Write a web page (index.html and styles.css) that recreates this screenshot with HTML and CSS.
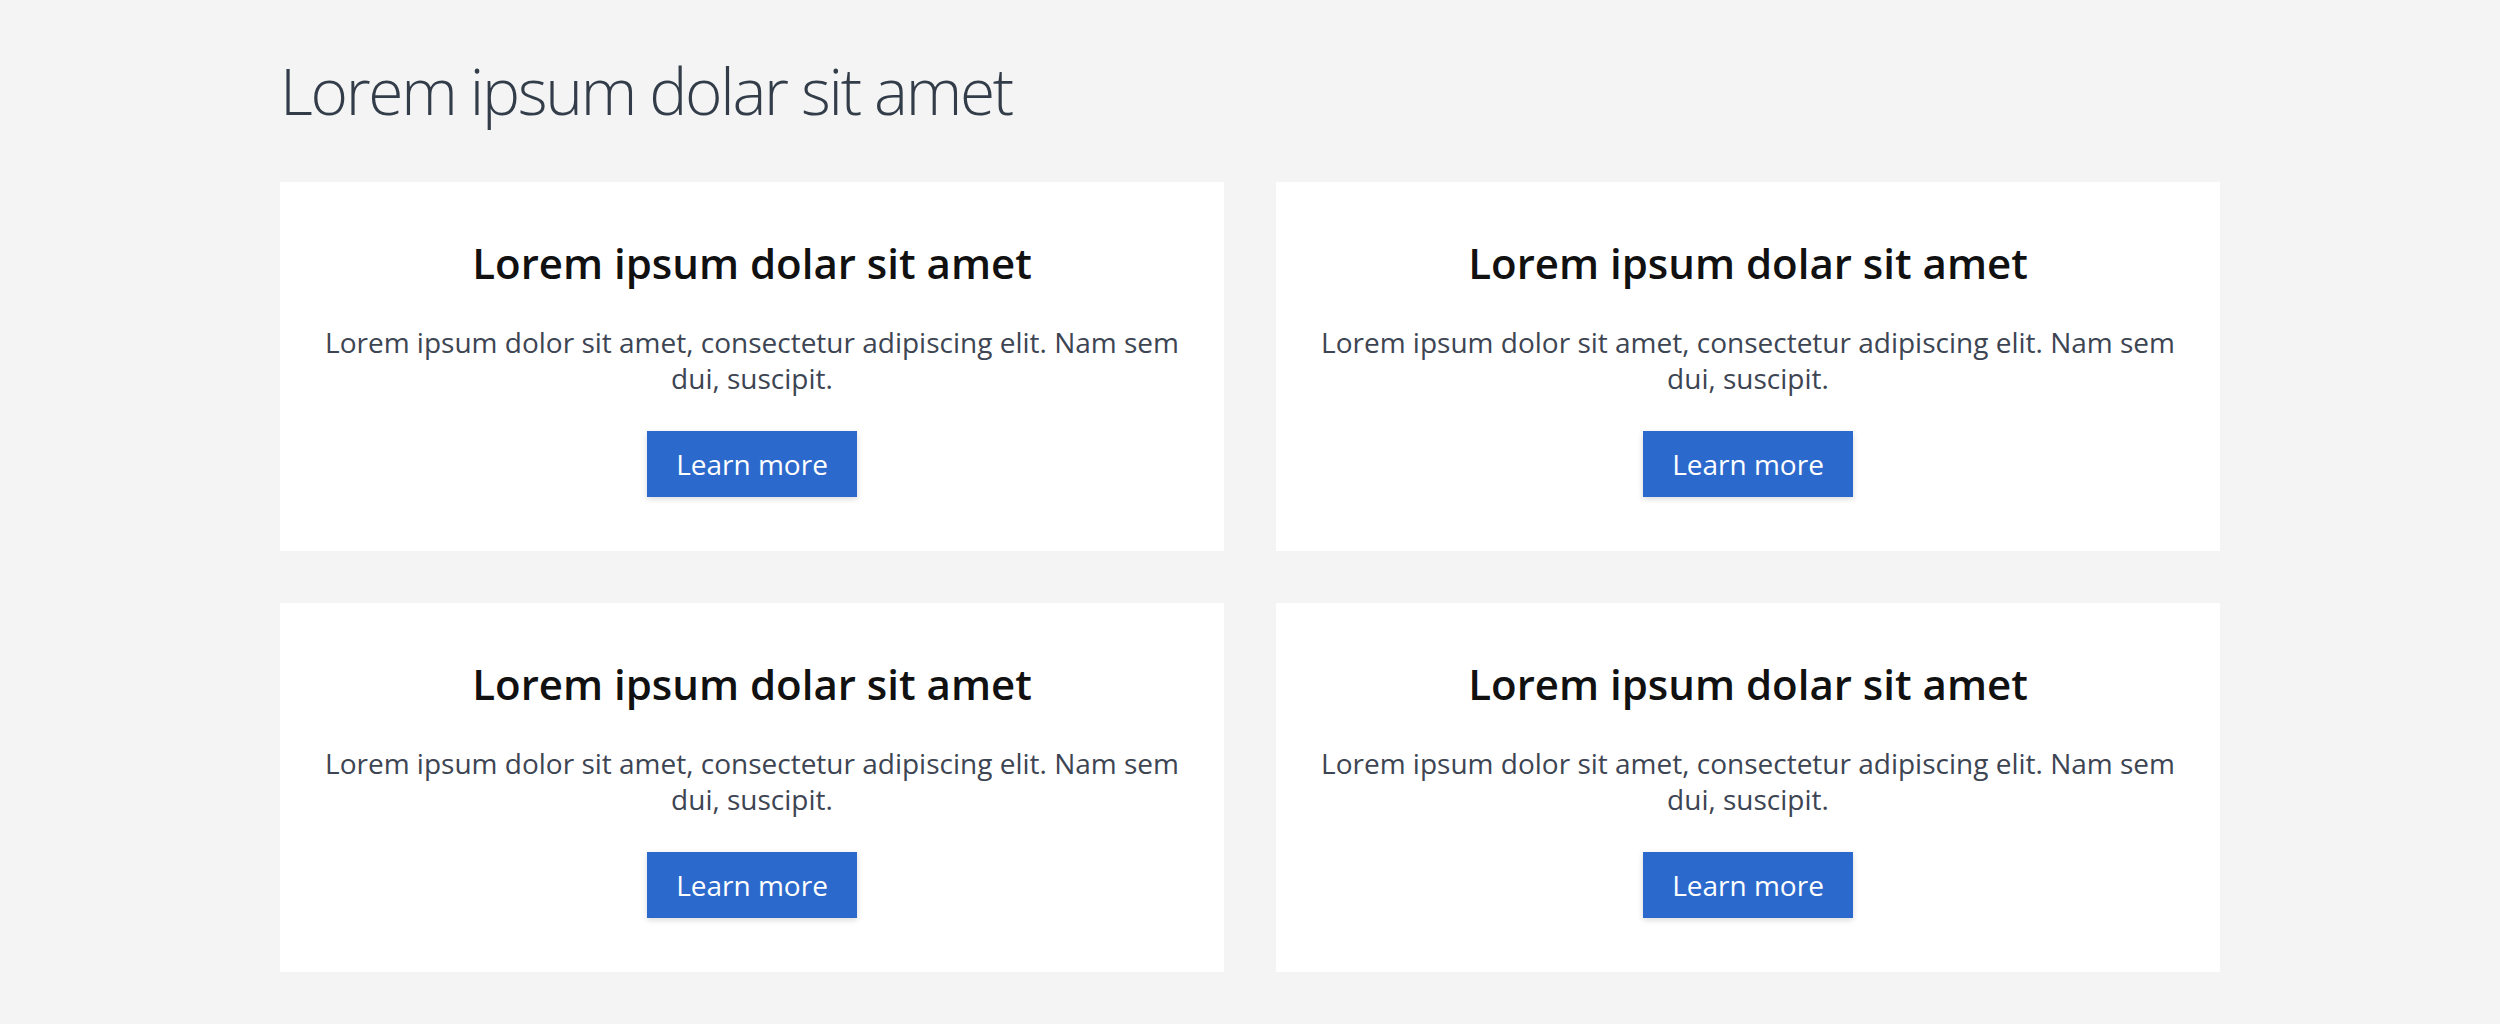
FILE: index.html
```html
<!DOCTYPE html>
<html lang="en">
<head>
    <meta charset="UTF-8">
    <meta name="viewport" content="width=device-width, initial-scale=1.0">
    <title>Lorem ipsum</title>
    <link rel="stylesheet" href="styles.css">
</head>
<body>
    <div class="container">
        <h1 class="page-title">Lorem ipsum dolar sit amet</h1>

        <div class="card-grid">
            <div class="card">
                <h2 class="card-title">Lorem ipsum dolar sit amet</h2>
                <p class="card-text">Lorem ipsum dolor sit amet, consectetur adipiscing elit. Nam sem dui, suscipit.</p>
                <a href="#" class="card-button">Learn more</a>
            </div>
            <div class="card">
                <h2 class="card-title">Lorem ipsum dolar sit amet</h2>
                <p class="card-text">Lorem ipsum dolor sit amet, consectetur adipiscing elit. Nam sem dui, suscipit.</p>
                <a href="#" class="card-button">Learn more</a>
            </div>
            <div class="card">
                <h2 class="card-title">Lorem ipsum dolar sit amet</h2>
                <p class="card-text">Lorem ipsum dolor sit amet, consectetur adipiscing elit. Nam sem dui, suscipit.</p>
                <a href="#" class="card-button">Learn more</a>
            </div>
            <div class="card">
                <h2 class="card-title">Lorem ipsum dolar sit amet</h2>
                <p class="card-text">Lorem ipsum dolor sit amet, consectetur adipiscing elit. Nam sem dui, suscipit.</p>
                <a href="#" class="card-button">Learn more</a>
            </div>
        </div>
    </div>
</body>
</html>
```

FILE: styles.css
```css
* {
    margin: 0;
    padding: 0;
    box-sizing: border-box;
}

body {
    font-family: 'Open Sans', 'Noto Sans', sans-serif;
    background: #f4f4f4;
    min-height: 100vh;
    color: #333;
}

.container {
    width: 1940px;
    margin: 0 auto;
    padding-top: 53px;
}

.page-title {
    font-size: 64px;
    font-weight: 300;
    letter-spacing: -2.3px;
    line-height: 1.2;
    color: #333d4a;
    margin-bottom: 52px;
}

.card-grid {
    display: grid;
    grid-template-columns: 1fr 1fr;
    gap: 52px;
}

.card {
    background: white;
    padding: 57px 40px 54px;
    text-align: center;
}

.card-title {
    font-size: 42px;
    font-weight: 600;
    line-height: 48px;
    color: #111;
    margin-bottom: 37px;
}

.card-text {
    font-size: 28px;
    line-height: 36px;
    color: #3d4553;
    margin-bottom: 35px;
}

.card-button {
    display: inline-block;
    background: #2c69cc;
    color: white;
    text-decoration: none;
    font-size: 28px;
    line-height: 38px;
    padding: 14px 29px;
    box-shadow: 0 2px 6px rgba(0, 0, 0, 0.15);
}
```
